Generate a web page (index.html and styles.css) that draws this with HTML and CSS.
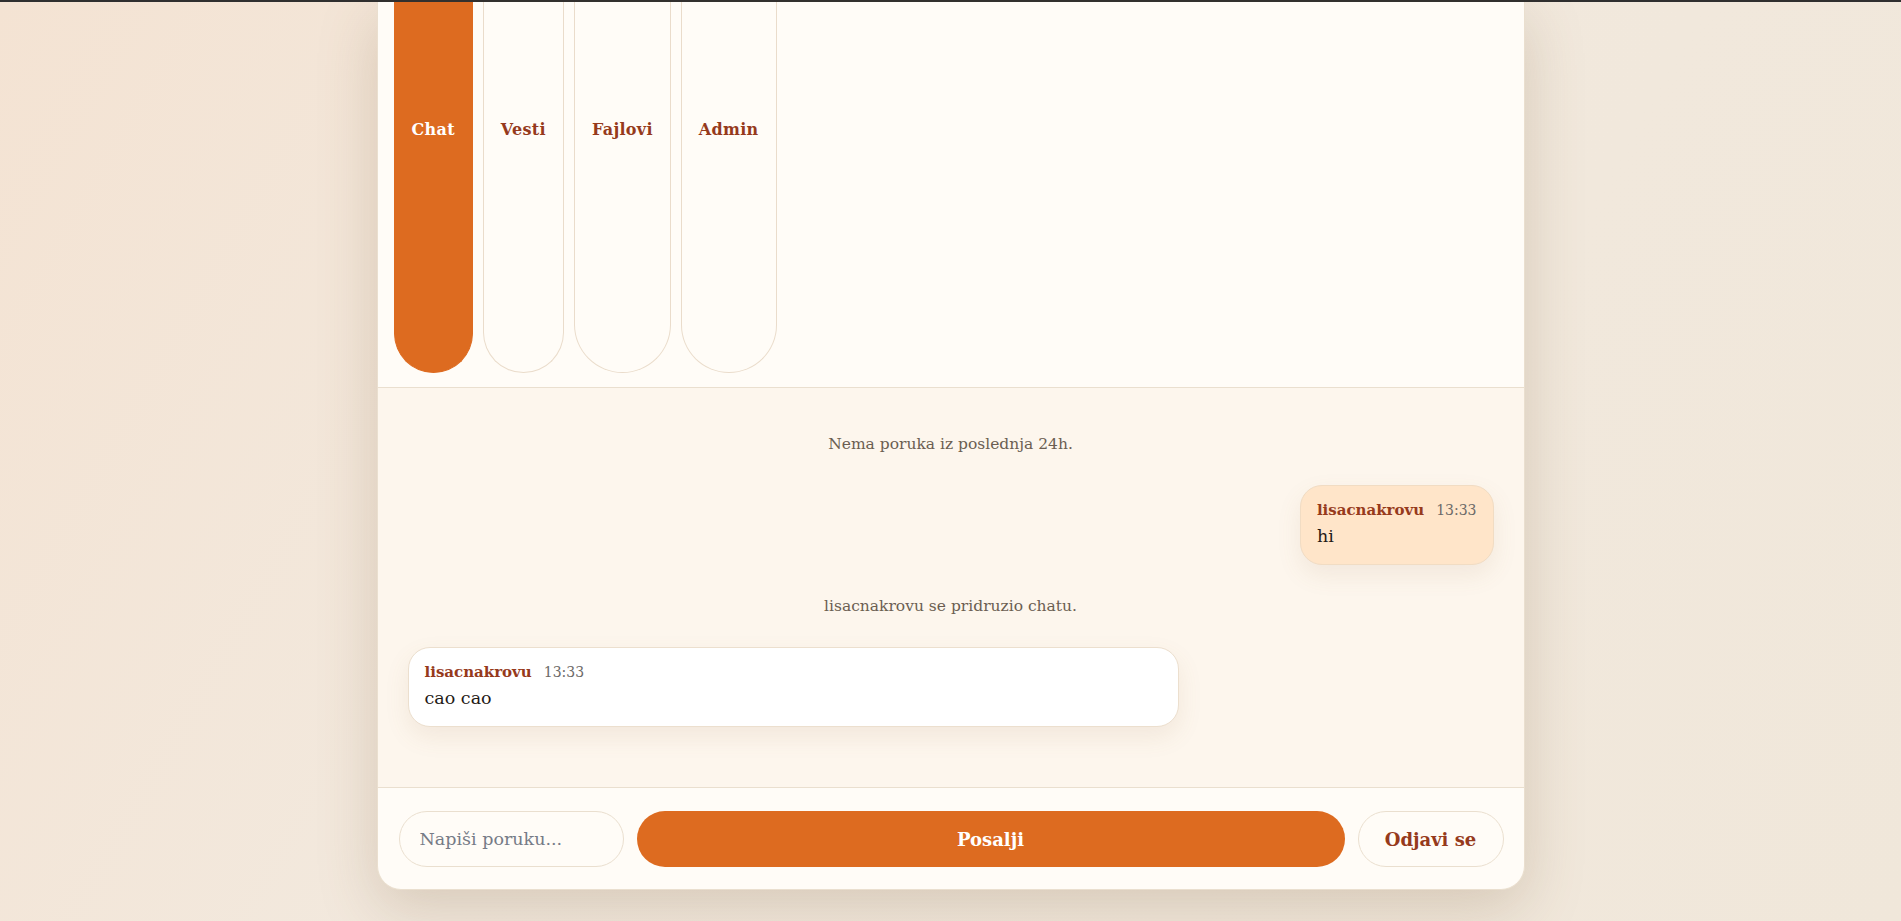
FILE: index.html
```html
<!DOCTYPE html>
<html lang="sr">

<head>
    <meta charset="UTF-8">
    <meta name="viewport" content="width=device-width, initial-scale=1.0">
    <title>Chat</title>
    <link rel="stylesheet" href="styles.css">
</head>

<body>
    <div class="topbar"></div>

    <div class="page">
        <div class="card">
            <div class="tabs">
                <button class="tab active">Chat</button>
                <button class="tab">Vesti</button>
                <button class="tab">Fajlovi</button>
                <button class="tab">Admin</button>
            </div>

            <div class="messages">
                <div class="system">Nema poruka iz poslednja 24h.</div>

                <div class="msg mine">
                    <div class="meta">
                        <span class="name">lisacnakrovu</span>
                        <span class="time">13:33</span>
                    </div>
                    <div class="text">hi</div>
                </div>

                <div class="system">lisacnakrovu se pridruzio chatu.</div>

                <div class="msg other">
                    <div class="meta">
                        <span class="name">lisacnakrovu</span>
                        <span class="time">13:33</span>
                    </div>
                    <div class="text">cao cao</div>
                </div>
            </div>

            <div class="composer">
                <input type="text" class="msg-input" placeholder="Napiši poruku...">
                <button class="send">Posalji</button>
                <button class="logout">Odjavi se</button>
            </div>
        </div>
    </div>
</body>

</html>
```

FILE: styles.css
```css
body {
    margin: 0;
    font-family: 'DejaVu Serif', 'Liberation Serif', serif;
    color: #2a211b;
    min-height: 100vh;
    background: linear-gradient(120deg, #f4e3d3 0%, #f2e9de 40%, #f0e7da 100%);
}

.topbar {
    height: 2px;
    background-color: #2f2f2f;
}

.page {
    display: flex;
    justify-content: center;
}

.card {
    width: 1148px;
    box-sizing: border-box;
    background-color: #fffcf7;
    border: 1px solid #eadfcf;
    border-top: none;
    border-radius: 0 0 24px 24px;
    box-shadow: 0 18px 60px rgba(120, 85, 50, 0.22);
    overflow: hidden;
}

/* tabs */
.tabs {
    display: flex;
    gap: 10px;
    padding: 0 16px 14px;
    border-bottom: 1px solid #eadfcf;
}

.tab {
    height: 371px;
    box-sizing: border-box;
    padding: 116px 17px 0;
    display: flex;
    justify-content: center;
    align-items: flex-start;
    font-family: inherit;
    font-size: 16px;
    line-height: 24px;
    font-weight: bold;
    letter-spacing: 0.3px;
    color: #963a1c;
    background-color: #fffcf7;
    border: 1px solid #eadccb;
    border-top: none;
    border-radius: 0 0 999px 999px;
    cursor: pointer;
}

.tab.active {
    background-color: #dd6b20;
    border-color: #dd6b20;
    color: #fff;
}

/* messages */
.messages {
    height: 399px;
    box-sizing: border-box;
    padding: 44px 30px 0;
    display: flex;
    flex-direction: column;
    gap: 29px;
    background-color: #fdf6ed;
}

.system {
    text-align: center;
    font-size: 15.5px;
    line-height: 24px;
    color: #6b5e52;
}

.msg {
    padding: 14px 16px 15px;
    border-radius: 22px;
    border: 1px solid #ecdfce;
    box-shadow: 0 10px 24px rgba(150, 110, 70, 0.1);
}

.msg.mine {
    align-self: flex-end;
    background-color: #ffe5c9;
    border-color: #f1dcc3;
}

.msg.other {
    align-self: flex-start;
    width: 71%;
    box-sizing: border-box;
    background-color: #fff;
}

.meta {
    display: flex;
    gap: 12px;
    align-items: baseline;
    line-height: 20px;
    margin-bottom: 4px;
}

.name {
    font-size: 15px;
    font-weight: bold;
    color: #963a1c;
}

.time {
    font-size: 14px;
    color: #6c6a68;
}

.text {
    font-size: 17.5px;
    line-height: 25px;
    color: #1f1a16;
}

/* composer */
.composer {
    display: flex;
    gap: 13px;
    padding: 23px 20px 22px 21px;
    border-top: 1px solid #eadfcf;
}

.msg-input {
    width: 225px;
    height: 56px;
    box-sizing: border-box;
    padding: 0 20px;
    font-family: inherit;
    font-size: 17.5px;
    color: #2a211b;
    background-color: #fffcf7;
    border: 1px solid #eadfcf;
    border-radius: 999px;
    outline: none;
}

.msg-input::placeholder {
    color: #767b86;
}

.send,
.logout {
    height: 56px;
    font-family: inherit;
    font-size: 18px;
    font-weight: bold;
    border-radius: 999px;
    cursor: pointer;
}

.send {
    flex: 1;
    background-color: #dd6b20;
    color: #fff;
    border: none;
}

.logout {
    width: 146px;
    background-color: #fffcf7;
    color: #963a1c;
    border: 1px solid #eadfcf;
}
```
